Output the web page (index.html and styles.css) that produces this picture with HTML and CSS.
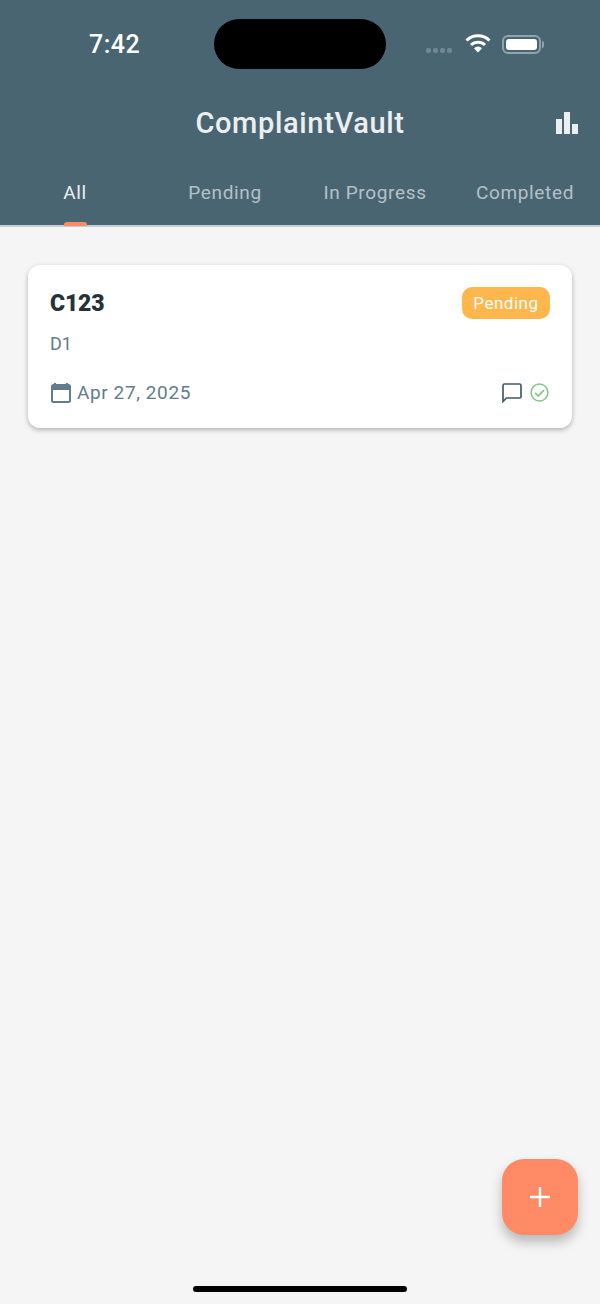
FILE: index.html
```html
<!DOCTYPE html>
<html lang="en">
<head>
    <meta charset="UTF-8">
    <meta name="viewport" content="width=device-width, initial-scale=1.0">
    <title>ComplaintVault</title>
    <link rel="stylesheet" href="styles.css">
</head>
<body>
    <div class="page">
        <header class="header">
            <div class="status-bar">
                <span class="clock">7:42</span>
                <div class="island"></div>
                <div class="status-icons">
                    <div class="signal"><i></i><i></i><i></i><i></i></div>
                    <svg class="wifi" width="26" height="20" viewBox="0 0 26 20">
                        <path d="M1.5 7.5a16.5 16.5 0 0 1 23 0" fill="none" stroke="#fff" stroke-width="3"/>
                        <path d="M6 12a10.2 10.2 0 0 1 14 0" fill="none" stroke="#fff" stroke-width="3"/>
                        <path d="M9 15.2a5.8 5.8 0 0 1 8 0L13 19.500z" fill="#fff"/>
                    </svg>
                    <div class="battery"><div class="battery-fill"></div></div>
                    <div class="battery-cap"></div>
                </div>
            </div>

            <div class="title-row">
                <h1>ComplaintVault</h1>
                <svg class="stats-icon" width="22" height="22" viewBox="0 0 22 22">
                    <rect x="0" y="7" width="6" height="15" fill="#eceff1"/>
                    <rect x="8" y="0" width="6" height="22" fill="#eceff1"/>
                    <rect x="16" y="12" width="6" height="10" fill="#eceff1"/>
                </svg>
            </div>

            <nav class="tabs">
                <div class="tab active">All</div>
                <div class="tab">Pending</div>
                <div class="tab">In Progress</div>
                <div class="tab">Completed</div>
            </nav>
        </header>

        <main class="content">
            <div class="card">
                <div class="card-top">
                    <h2>C123</h2>
                    <span class="badge">Pending</span>
                </div>
                <p class="desc">D1</p>
                <div class="card-bottom">
                    <div class="date">
                        <svg width="22" height="22" viewBox="0 0 22 22">
                            <path d="M5 1v3M17 1v3" stroke="#607d8b" stroke-width="2.200" fill="none"/>
                            <rect x="2" y="3" width="18" height="17" rx="1.500" fill="none" stroke="#607d8b" stroke-width="2"/>
                            <rect x="2" y="3" width="18" height="5" fill="#607d8b"/>
                        </svg>
                        <span>Apr 27, 2025</span>
                    </div>
                    <div class="card-icons">
                        <svg width="20" height="20" viewBox="0 0 20 20">
                            <path d="M1 18.500V2.500A1.500 1.500 0 0 1 2.500 1h15A1.500 1.500 0 0 1 19 2.500v11a1.500 1.500 0 0 1-1.500 1.500H4.500z" fill="none" stroke="#455a64" stroke-width="1.700"/>
                        </svg>
                        <svg width="19" height="19" viewBox="0 0 18 18">
                            <circle cx="9" cy="9" r="8" fill="none" stroke="#81c784" stroke-width="1.400"/>
                            <path d="M4.800 9.300l3 3 5.400-5.600" fill="none" stroke="#81c784" stroke-width="1.600"/>
                        </svg>
                    </div>
                </div>
            </div>
        </main>

        <button class="fab">
            <svg width="20" height="20" viewBox="0 0 20 20">
                <path d="M10 0v20M0 10h20" stroke="#fff" stroke-width="2.400"/>
            </svg>
        </button>
        <div class="home-bar"></div>
    </div>
</body>
</html>
```

FILE: styles.css
```css
* {
    box-sizing: border-box;
}

body {
    margin: 0;
    padding: 0;
    font-family: Roboto, "Liberation Sans", sans-serif;
    background-color: #f5f5f5;
}

.page {
    position: relative;
    display: flex;
    flex-direction: column;
    width: 600px;
    height: 1304px;
    overflow: hidden;
}

.header {
    position: relative;
    height: 227px;
    flex-shrink: 0;
    background-color: #4a6572;
    border-bottom: 2px solid #c3cdd3;
}

/* status bar */
.status-bar {
    display: flex;
    align-items: center;
    height: 50px;
    margin-top: 19px;
}

.clock {
    width: 214px;
    padding-left: 89px;
    color: #fff;
    font-size: 25px;
    font-weight: 500;
    letter-spacing: 0.5px;
}

.island {
    width: 172px;
    height: 50px;
    background-color: #000;
    border-radius: 25px;
}

.status-icons {
    display: flex;
    align-items: center;
    margin-left: 40px;
}

.signal {
    display: flex;
    gap: 2px;
    margin-top: 13px;
}

.signal i {
    width: 5px;
    height: 5px;
    border-radius: 2px;
    background-color: #6f8893;
}

.wifi {
    margin-left: 13px;
    margin-top: -2px;
}

.battery {
    width: 39px;
    height: 19px;
    margin-left: 11px;
    padding: 2px;
    border: 2px solid #90a4ae;
    border-radius: 6px;
}

.battery-fill {
    height: 100%;
    background-color: #fff;
    border-radius: 3px;
}

.battery-cap {
    width: 2px;
    height: 7px;
    margin-left: 1px;
    background-color: #90a4ae;
    border-radius: 0 2px 2px 0;
}

/* title */
.title-row {
    position: relative;
    margin-top: 31px;
    text-align: center;
}

.title-row h1 {
    margin: 0;
    color: #eceff1;
    font-size: 29px;
    line-height: 46px;
    font-weight: 500;
    letter-spacing: 0.65px;
}

.stats-icon {
    position: absolute;
    top: 12px;
    right: 22px;
}

/* tabs */
.tabs {
    display: grid;
    grid-template-columns: repeat(4, 1fr);
    margin-top: 28px;
}

.tab {
    position: relative;
    height: 37px;
    color: #b4c1c8;
    font-size: 19px;
    line-height: 37px;
    text-align: center;
    letter-spacing: 0.65px;
}

.tab.active {
    color: #eceff1;
}

.tab.active::after {
    content: "";
    position: absolute;
    left: 64px;
    bottom: -15px;
    width: 23px;
    height: 4px;
    background-color: #ff8a65;
    border-radius: 3px 3px 0 0;
}

/* list */
.content {
    flex: 1;
    padding: 38px 28px 0;
}

.card {
    height: 163px;
    padding: 22px 22px 0;
    background-color: #fff;
    border-radius: 12px;
    box-shadow: 0 2px 5px rgba(0, 0, 0, 0.28);
}

.card-top {
    display: flex;
    justify-content: space-between;
    align-items: center;
}

.card-top h2 {
    margin: 0;
    color: #263238;
    font-size: 23px;
    font-weight: 900;
    letter-spacing: -0.2px;
}

.badge {
    padding: 0 11.500px;
    height: 32px;
    color: #fff;
    background-color: #ffb74d;
    border-radius: 10px;
    font-size: 17px;
    line-height: 32px;
    letter-spacing: 0.5px;
}

.desc {
    margin: 12px 0 0;
    color: #607d8b;
    font-size: 18px;
    line-height: 26px;
}

.card-bottom {
    display: flex;
    justify-content: space-between;
    align-items: center;
    margin-top: 24px;
}

.date {
    display: flex;
    align-items: center;
    gap: 5px;
    color: #607d8b;
    font-size: 19px;
    letter-spacing: 0.6px;
}

.card-icons {
    display: flex;
    align-items: center;
    gap: 8px;
    padding-right: 1px;
}

/* floating things */
.fab {
    position: absolute;
    left: 502px;
    top: 1159px;
    display: flex;
    align-items: center;
    justify-content: center;
    width: 76px;
    height: 76px;
    padding: 0;
    border: none;
    border-radius: 22px;
    background-color: #ff8a65;
    box-shadow: 0 7px 12px rgba(0, 0, 0, 0.25);
}

.home-bar {
    position: absolute;
    left: 193px;
    top: 1286px;
    width: 214px;
    height: 6px;
    background-color: #000;
    border-radius: 3px;
}
```
